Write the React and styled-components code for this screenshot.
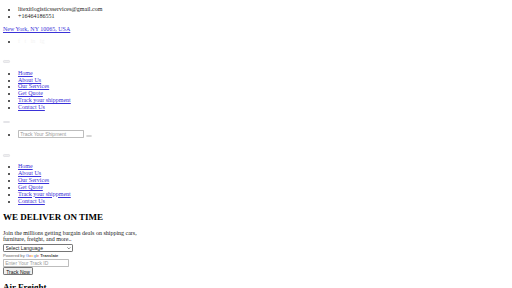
import React from "react";
import styled, { createGlobalStyle } from "styled-components";

const GlobalStyle = createGlobalStyle`
  html, body {
    margin: 0;
    background: #fff;
  }
`;

// the whole page is a raw, unstyled site shrunk to fit the window
const Page = styled.div`
  zoom: 0.375;
  padding: 8px;
  font-family: "Liberation Serif", "Times New Roman", serif;
  font-size: 16px;
  color: #222;
  width: 1350px;
`;

const List = styled.ul`
  margin: ${(p) => (p.$first ? "8px" : "16px")} 0 16px;
  padding-left: 40px;
  list-style: disc;
`;

const Item = styled.li`
  line-height: 18.4px;
`;

const Link = styled.a`
  color: #3a32d8;
  text-decoration: underline;
`;

const Address = styled.p`
  margin: 16px 0;
`;

const Faint = styled.span`
  color: #f4f4f4;
  margin-right: 12px;
`;

const Header = styled.div`
  padding-top: 16px;
`;

const Toggler = styled.button`
  display: inline-block;
  width: 16px;
  height: 6px;
  padding: 1px 6px;
  border: 2px solid #e4e4e8;
  border-radius: 3px;
  background: #efefef;
  vertical-align: baseline;
`;

const Bar = styled.div`
  line-height: 18.4px;
  margin-top: ${(p) => p.$gap || "0"};
`;

const SearchInput = styled.input`
  box-sizing: border-box;
  width: 176px;
  height: 22px;
  padding: 1px 3px;
  border: 2px solid #bdbdbd;
  border-radius: 2px;
  font-family: "Liberation Sans", Arial, sans-serif;
  font-size: 13.33px;
  &::placeholder {
    color: #9a9a9a;
  }
`;

const IconButton = styled.button`
  width: 16px;
  height: 6px;
  margin-left: 4px;
  padding: 0;
  border: 2px solid #d6d6d6;
  border-radius: 3px;
  background: #efefef;
`;

const Hero = styled.div`
  width: 380px;
`;

const Heading = styled.h2`
  font-size: 24px;
  font-weight: bold;
  color: #000;
  margin: 20px 0;
`;

const Lead = styled.p`
  margin: 16px 0 0;
  line-height: 18.4px;
`;

const SelectWrap = styled.div`
  position: relative;
  width: 187px;
  margin-top: 2px;
`;

const LangSelect = styled.select`
  display: block;
  box-sizing: border-box;
  width: 187px;
  height: 20px;
  padding: 0 4px;
  appearance: none;
  font-family: "Liberation Sans", Arial, sans-serif;
  font-size: 13.33px;
  border: 1px solid #767676;
  border-radius: 3px;
  background: #fff;
  color: #222;
`;

const Chevron = styled.svg`
  position: absolute;
  right: 6px;
  top: 7px;
  pointer-events: none;
`;

const Powered = styled.div`
  font-family: "Liberation Sans", Arial, sans-serif;
  font-size: 11px;
  color: #666;
  line-height: 20px;
  white-space: nowrap;
`;

const Brand = styled.span`
  font-weight: bold;
  color: #444;
`;

const G = styled.span`
  color: ${(p) => p.$c};
`;

const TrackInput = styled.input`
  display: block;
  box-sizing: border-box;
  width: 176px;
  height: 22px;
  padding: 1px 3px;
  border: 2px solid #bdbdbd;
  border-radius: 2px;
  font-family: "Liberation Sans", Arial, sans-serif;
  font-size: 13.33px;
  &::placeholder {
    color: #9a9a9a;
  }
`;

const TrackButton = styled.button`
  display: block;
  box-sizing: border-box;
  margin-top: 0;
  padding: 1px 6px;
  height: 20px;
  border: 2px solid #767676;
  border-radius: 3px;
  background: #efefef;
  font-family: "Liberation Sans", Arial, sans-serif;
  font-size: 13.33px;
  color: #111;
`;

const navLinks = [
  "Home",
  "About Us",
  "Our Services",
  "Get Quote",
  "Track your shippment",
  "Contact Us",
];

const Nav = () => (
  <List>
    {navLinks.map((l) => (
      <Item key={l}>
        <Link href="#">{l}</Link>
      </Item>
    ))}
  </List>
);

const GoogleWord = () => (
  <>
    <G $c="#4285f4">G</G>
    <G $c="#ea4335">o</G>
    <G $c="#fbbc05">o</G>
    <G $c="#4285f4">g</G>
    <G $c="#34a853">l</G>
    <G $c="#ea4335">e</G>
  </>
);

export default function App() {
  return (
    <Page>
      <GlobalStyle />
      <List $first>
        <Item>litexitlogisticsservices@gmail.com</Item>
        <Item>+16464186551</Item>
      </List>
      <Address>
        <Link href="#">New York, NY 10065, USA</Link>
      </Address>
      <List>
        <Item>
          <Faint>f</Faint>
          <Faint>t</Faint>
          <Faint>in</Faint>
          <Faint>ig</Faint>
        </Item>
      </List>

      <Header>
        <Bar>
          <Toggler />
        </Bar>
        <Nav />
        <Bar $gap="16px">
          <Toggler />
        </Bar>
        <List>
          <Item>
            <SearchInput placeholder="Track Your Shipment" />
            <IconButton />
          </Item>
        </List>
        <Bar $gap="32px">
          <Toggler />
        </Bar>
        <Nav />
      </Header>

      <Hero>
        <Heading>WE DELIVER ON TIME</Heading>
        <Lead>
          Join the millions getting bargain deals on shipping cars, furniture,
          freight, and more..
        </Lead>
        <SelectWrap>
          <LangSelect defaultValue="">
            <option value="">Select Language</option>
          </LangSelect>
          <Chevron width="10" height="6" viewBox="0 0 10 6">
            <path d="M1 1l4 4 4-4" fill="none" stroke="#333" strokeWidth="1.6" />
          </Chevron>
        </SelectWrap>
        <Powered>
          Powered by <GoogleWord /> <Brand>Translate</Brand>
        </Powered>
        <TrackInput placeholder="Enter Your Track ID" />
        <TrackButton>Track Now</TrackButton>
        <Heading>Air Freight</Heading>
      </Hero>
    </Page>
  );
}
